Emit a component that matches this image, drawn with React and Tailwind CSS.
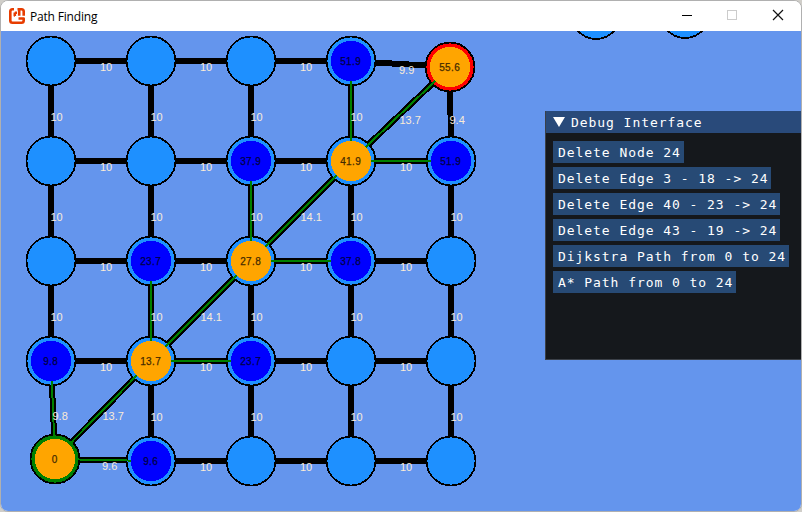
const BLUE = '#1e90ff';
const pos = (i) => {
  if (i === 20) return [55, 459];
  if (i === 4) return [450, 67];
  return [51 + 100 * (i % 5), 61 + 100 * Math.floor(i / 5)];
};
const values = { 3: '51.9', 4: '55.6', 7: '37.9', 8: '41.9', 9: '51.9', 11: '23.7', 12: '27.8', 13: '37.8', 15: '9.8', 16: '13.7', 17: '23.7', 20: '0', 21: '9.6' };
const onPath = [4, 8, 12, 16, 20];
const weights = { '3-4': '9.9', '4-9': '9.4', '15-20': '9.8', '20-21': '9.6' };
const visited = ['3-8', '8-9', '7-12', '12-13', '11-16', '16-17', '15-20', '20-21'];

const edges = [];
for (let i = 0; i < 25; i++) {
  if (i % 5 < 4) edges.push([i, i + 1]);
  if (i < 20) edges.push([i, i + 5]);
}
const links = edges.map(([a, b]) => {
  const key = `${a}-${b}`;
  return { a, b, label: weights[key] || '10', green: visited.includes(key) };
});
links.push(
  { a: 20, b: 16, label: '13.7', green: true },
  { a: 16, b: 12, label: '14.1', green: true },
  { a: 12, b: 8, label: '14.1', green: true },
  { a: 8, b: 4, label: '13.7', green: true },
);

function Line({ link, color, width }) {
  const [x1, y1] = pos(link.a);
  const [x2, y2] = pos(link.b);
  return <line x1={x1} y1={y1} x2={x2} y2={y2} stroke={color} strokeWidth={width} />;
}

function Disc({ x, y, fill }) {
  return (
    <g>
      <circle cx={x} cy={y} r="25.4" fill="#000" />
      <circle cx={x} cy={y} r="23.6" fill={fill} />
    </g>
  );
}

function Graph() {
  const nodes = Array.from({ length: 25 }, (_, i) => i);
  return (
    <svg viewBox="1 31 800 480" width="800" height="480" className="block" fontFamily="'Liberation Sans', Arial, sans-serif" fontSize="11">
      <g shapeRendering="crispEdges">
        {links.map((l, i) => <Line key={i} link={l} color="#000" width={6} />)}
        {nodes.map((n) => {
          const [x, y] = pos(n);
          return <Disc key={n} x={x} y={y} fill={n === 20 ? '#008000' : n === 4 ? '#ff0000' : BLUE} />;
        })}
        <Disc x={596} y={14.5} fill={BLUE} />
        <Disc x={685} y={13.5} fill={BLUE} />
        {links.filter((l) => l.green).map((l, i) => <Line key={i} link={l} color="#008000" width={2} />)}
        {nodes.filter((n) => values[n]).map((n) => {
          const [x, y] = pos(n);
          return <circle key={n} cx={x} cy={y} r="20.2" fill={onPath.includes(n) ? '#ffa500' : '#0000ff'} />;
        })}
      </g>
      {links.map((l, i) => {
        const [x1, y1] = pos(l.a);
        const [x2, y2] = pos(l.b);
        const shift = y1 === y2 || l.label === '9.6' || l.label === '9.9' ? 1 : 0.5;
        return <text key={i} x={Math.floor((x1 + x2) / 2) - shift} y={Math.floor((y1 + y2) / 2) + 10} fill="#faebd7">{l.label}</text>;
      })}
      {nodes.filter((n) => values[n]).map((n) => {
        const [x, y] = pos(n);
        return <text key={n} x={x - 0.3} y={y + 3.8} textAnchor="middle" fontSize="10" letterSpacing="0.4" fill="#000" stroke="#000" strokeWidth="0.25" opacity="0.75">{values[n]}</text>;
      })}
    </svg>
  );
}

const actions = [
  'Delete Node 24',
  'Delete Edge 3 - 18 -> 24',
  'Delete Edge 40 - 23 -> 24',
  'Delete Edge 43 - 19 -> 24',
  'Dijkstra Path from 0 to 24',
  'A* Path from 0 to 24',
];

function DebugPanel() {
  return (
    <section className="absolute left-[544px] top-[80px] h-[249px] w-[256px] border-b border-l border-[#3b4048] bg-[#15181c] font-['DejaVu_Sans_Mono',monospace] text-[13px] tracking-[0.943px] text-white">
      <header className="flex h-[22px] items-center bg-[#294a7a] pl-[7px] whitespace-pre">
        <svg width="12" height="10" viewBox="0 0 12 10" className="mr-[6px]"><path d="M0 0H12L6 10Z" fill="#fff" /></svg>
        <span className="pt-px">Debug Interface</span>
      </header>
      <div className="flex flex-col items-start gap-1 pl-[7px] pt-2">
        {actions.map((a) => (
          <button key={a} className="h-[22px] bg-[#274a75] pl-[5px] pr-[3px] pt-px leading-[21px] whitespace-pre">{a}</button>
        ))}
      </div>
    </section>
  );
}

function Logo() {
  return (
    <svg width="16" height="16" viewBox="0 0 16 16" fill="none" stroke="#e73c00" strokeWidth="2.6" strokeLinejoin="round">
      <path d="M5 1.3H3.5Q1.3 1.3 1.3 3.5V12.5Q1.3 14.7 3.5 14.7H12.5Q14.7 14.7 14.7 12.5V10.5H9.5" />
      <path d="M5.8 8V4.5M5.8 4.5V7.5H6M5.8 4.8H8M10.2 7.8V2M14.7 7.8V3.5Q14.7 1.3 12.5 1.3H8.5" />
    </svg>
  );
}

export default function App() {
  return (
    <div className="h-[512px] w-[802px] overflow-hidden bg-[#d0cec9]">
      <div className="flex h-[512px] w-[802px] flex-col overflow-hidden rounded-lg border border-[#b0b0b0] bg-white">
        <header className="flex h-[30px] shrink-0 items-center bg-white pl-2">
          <Logo />
          <h1 className="ml-[5px] pt-px font-['Open_Sans','Noto_Sans',sans-serif] text-[12px] tracking-[-0.18px] text-black">Path Finding</h1>
          <svg width="110" height="30" viewBox="680 1 110 30" className="ml-auto mr-[11px]" fill="none" shapeRendering="crispEdges">
            <path d="M682 15.5H692" stroke="#000" />
            <rect x="727.5" y="10.5" width="9" height="9" stroke="#ccc" />
            <path d="M773 10L783 20M783 10L773 20" stroke="#111" strokeWidth="1.2" shapeRendering="auto" />
          </svg>
        </header>
        <main className="relative h-[480px] overflow-hidden bg-[#6495ed]">
          <Graph />
          <DebugPanel />
        </main>
      </div>
    </div>
  );
}
